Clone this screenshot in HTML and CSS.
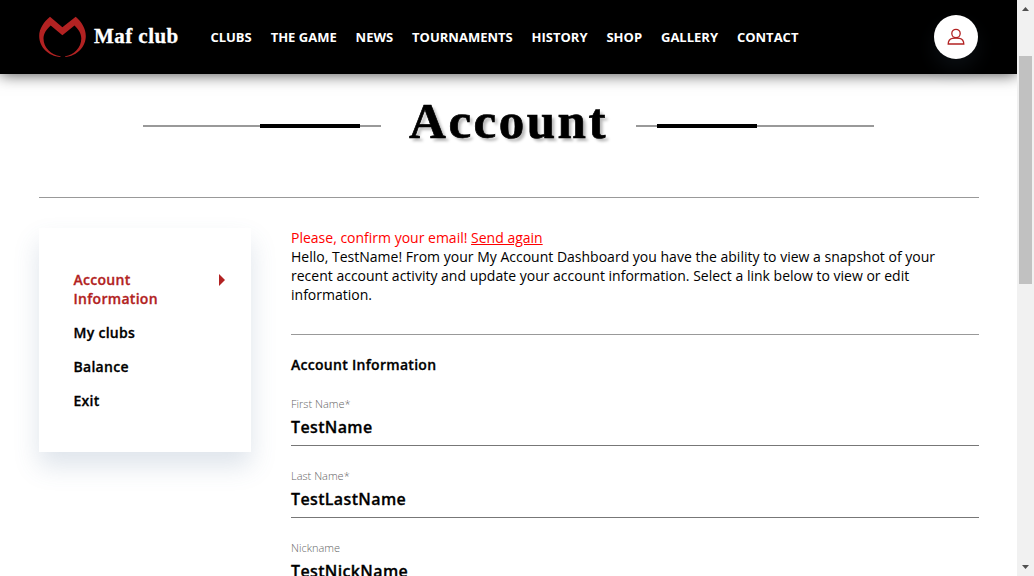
FILE: index.html
```html
<!DOCTYPE html>
<html lang="en">
<head>
<meta charset="utf-8">
<title>Maf club - Account</title>
<link rel="stylesheet" href="styles.css">
</head>
<body>
<div class="viewport">
  <div class="page">
    <header class="header">
      <a class="brand">
        <svg class="logo" width="48" height="42" viewBox="0 0 48 42"><path fill="#b22222" d="M11 .7 23.400 11.300 36.700.7C42.500 5.500 46.800 12.500 46.800 20C46.800 31 38 40 26.200 41V40.300C35 39 42.300 31.500 42.300 22.500C42.300 17.500 39.500 13.200 35.500 9.500L23.400 19.200 11.700 9.500C7.500 13.200 4.500 17.500 4.500 22.500C4.500 31.500 12 39 21.500 40.300V41C9 40 .2 31 .2 20C.2 12.500 5 5.500 11 .7Z"/></svg>
        <span class="brand-name">Maf club</span>
      </a>
      <nav class="nav"><a>CLUBS</a><a>THE GAME</a><a>NEWS</a><a>TOURNAMENTS</a><a>HISTORY</a><a>SHOP</a><a>GALLERY</a><a>CONTACT</a></nav>
      <a class="user">
        <svg width="18" height="18" viewBox="0 0 18 18" fill="none" stroke="#b22222" stroke-width="1.300"><circle cx="9" cy="5.500" r="4.200"/><path d="M5.500 10.300C3 10.800 1.200 12.500 1.200 16H16.800C16.800 12.500 15 10.800 12.500 10.300Q9 9.900 5.500 10.300Z"/></svg>
      </a>
    </header>
    <div class="title-row">
      <span class="rule rule-left"></span>
      <h1 class="title">Account</h1>
      <span class="rule rule-right"></span>
    </div>
    <main class="main">
      <aside class="side">
        <a class="side-link active"><span>Account Information</span><i class="arrow"></i></a>
        <a class="side-link">My clubs</a>
        <a class="side-link">Balance</a>
        <a class="side-link">Exit</a>
      </aside>
      <section class="content">
        <p class="notice">Please, confirm your email! <a>Send again</a></p>
        <p class="intro">Hello, TestName! From your My Account Dashboard you have the ability to view a snapshot of your recent account activity and update your account information. Select a link below to view or edit information.</p>
        <h2 class="subtitle">Account Information</h2>
        <div class="field"><span class="label">First Name*</span><span class="value">TestName</span></div>
        <div class="field"><span class="label">Last Name*</span><span class="value">TestLastName</span></div>
        <div class="field"><span class="label">Nickname</span><span class="value">TestNickName</span></div>
      </section>
    </main>
  </div>
  <div class="scrollbar">
    <svg width="17" height="17" viewBox="0 0 17 17"><path fill="#505050" d="M5 11 8.500 7 12 11Z"/></svg>
    <div class="track"><div class="thumb"></div></div>
    <svg width="17" height="17" viewBox="0 0 17 17"><path fill="#505050" d="M5 6 8.500 10 12 6Z"/></svg>
  </div>
</div>
</body>
</html>
```
FILE: styles.css
```css
* { box-sizing: border-box; }
body {
  margin: 0;
  background: #fff;
  color: #000;
  font: 14px/19px "Open Sans", sans-serif;
  overflow: hidden;
}
.viewport { display: flex; height: 576px; overflow: hidden; }
.page { width: 1017px; height: 576px; overflow: hidden; }

.header {
  display: flex;
  align-items: center;
  height: 74px;
  padding: 0 39px;
  background: #000;
  box-shadow: 0 0 15px rgba(0, 0, 0, .75);
}
.brand { display: flex; align-items: center; width: 171.400px; gap: 7px; }
.logo { display: block; }
.brand-name {
  margin-top: -2px;
  color: #fff;
  font: bold 21px/28px "Liberation Serif", serif;
  letter-spacing: .45px;
  -webkit-text-stroke: .3px #fff;
  white-space: nowrap;
}
.nav {
  display: flex;
  gap: 18.900px;
  color: #fff;
  font-size: 13px;
  font-weight: 700;
  white-space: nowrap;
}
.user {
  display: flex;
  align-items: center;
  justify-content: center;
  width: 44px;
  height: 44px;
  margin-left: auto;
  border-radius: 50%;
  background: #fff;
  box-shadow: 0 10px 20px rgba(74, 104, 125, .15);
}

.title-row {
  display: flex;
  align-items: center;
  height: 103px;
  padding: 0 143px;
}
.rule { width: 238px; height: 4px; }
.rule-left {
  background: linear-gradient(#000, #000) 117px 0 / 100px 4px no-repeat,
    linear-gradient(#999, #999) 0 1px / 238px 2px no-repeat;
}
.rule-right {
  background: linear-gradient(#000, #000) 21px 0 / 100px 4px no-repeat,
    linear-gradient(#999, #999) 0 1px / 238px 2px no-repeat;
}
.title {
  width: 255px;
  margin: -10px 0 0;
  text-align: center;
  font: bold 51px/60px "Liberation Serif", serif;
  letter-spacing: 2.500px;
  -webkit-text-stroke: .7px #000;
  text-shadow: 3px 3px 3px rgba(0, 0, 0, .28);
}

.main {
  display: flex;
  align-items: flex-start;
  gap: 40px;
  width: 940px;
  margin: 20px 0 0 39px;
  padding-top: 30px;
  border-top: 1px solid #999;
}
.side {
  display: flex;
  flex-direction: column;
  gap: 15px;
  width: 212px;
  height: 224px;
  padding: 42px 26px 0 34.500px;
  background: #fff;
  box-shadow: 0 14px 24px rgba(74, 104, 145, .18);
}
.side-link {
  display: flex;
  justify-content: space-between;
  font-weight: 600;
  letter-spacing: .29px;
  -webkit-text-stroke: .3px currentColor;
}
.active { color: #b22222; }
.active span { width: 100px; }
.arrow {
  width: 0;
  height: 0;
  margin-top: 4px;
  border: solid transparent;
  border-width: 6px 0 6px 6px;
  border-left-color: #b22222;
}
.content { width: 688px; }
.notice, .intro { margin: 0; }
.notice { color: #f00; }
.notice a { text-decoration: underline; }
.intro { padding-bottom: 30px; letter-spacing: .005px; border-bottom: 1px solid #999; }
.subtitle {
  margin: 20px 0 21px;
  font-size: 14px;
  line-height: 19px;
  font-weight: 600;
  letter-spacing: .29px;
  -webkit-text-stroke: .3px #000;
}
.field {
  display: flex;
  flex-direction: column;
  height: 51px;
  margin-bottom: 21px;
  border-bottom: 1px solid #777;
}
.label { color: #666; font-size: 11px; line-height: 17px; font-weight: 300; }
.value {
  margin-top: 3px;
  font-size: 16px;
  line-height: 24px;
  font-weight: 600;
  letter-spacing: .36px;
  -webkit-text-stroke: .3px #000;
}

.scrollbar { display: flex; flex-direction: column; width: 17px; background: #f1f1f1; }
.track { flex: 1; padding: 39px 2px 0; }
.thumb { height: 228px; background: #c1c1c1; }
```
